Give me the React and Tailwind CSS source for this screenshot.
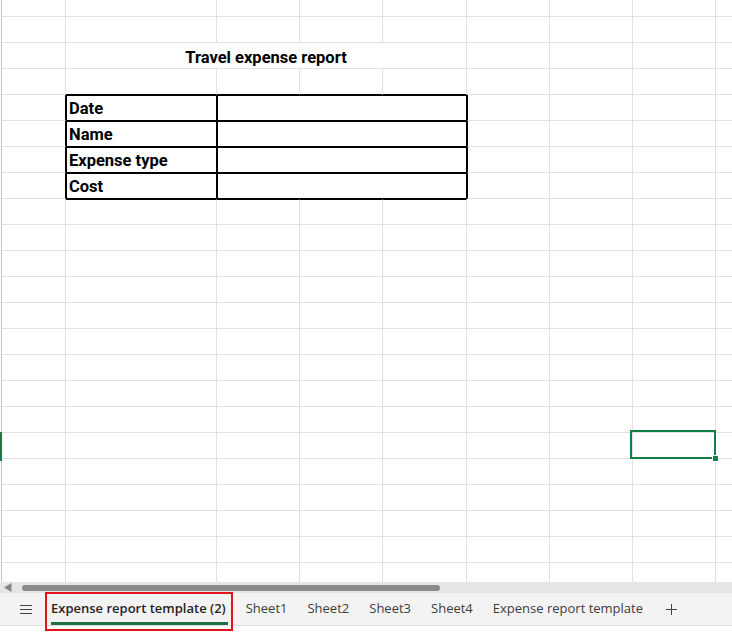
import React from "react";

const CELL = "h-full shrink-0 border-r border-b border-[#e1e1e1]";
const WIDTHS = ["w-[64px]", "w-[151px]", "w-[83px]", "w-[83px]", "w-[84px]", "w-[83px]", "w-[83px]", "w-[83px]"];

function Cell({ w, extra = "" }) {
  return <div className={`${CELL} ${w} ${extra}`} />;
}

function PlainRow({ first, selected }) {
  const h = first ? "h-[17px]" : "h-[26px]";
  return (
    <div className={`flex shrink-0 ${h}`}>
      {WIDTHS.map((w, i) =>
        selected && i === 7 ? (
          <div key={i} className={`${CELL} ${w} relative`}>
            <div className="absolute left-[-3px] top-[-3px] w-[86px] h-[29px] border-2 border-[#137e45] z-10" />
            <div className="absolute left-[79px] top-[22px] w-[7px] h-[7px] bg-[#137e45] border border-white z-20" />
          </div>
        ) : (
          <Cell key={i} w={w} />
        )
      )}
      <div className="h-full flex-1 border-b border-[#e1e1e1]" />
    </div>
  );
}

function TitleRow() {
  return (
    <div className="flex shrink-0 h-[26px]">
      <Cell w="w-[64px]" />
      <div className={`${CELL} w-[401px] flex items-end justify-center pb-[1px]`}>
        <span className="text-[16.5px] leading-[19px] font-bold text-black">Travel expense report</span>
      </div>
      <Cell w="w-[83px]" />
      <Cell w="w-[83px]" />
      <Cell w="w-[83px]" />
      <div className="h-full flex-1 border-b border-[#e1e1e1]" />
    </div>
  );
}

function AboveTableRow() {
  const edge = "h-full shrink-0 border-r border-b border-r-[#e1e1e1] border-b-black";
  return (
    <div className="flex shrink-0 h-[26px]">
      <Cell w="w-[64px]" />
      <div className={`${edge} w-[151px]`} />
      <div className={`${edge} w-[83px]`} />
      <div className={`${edge} w-[83px]`} />
      <div className={`${edge} w-[84px]`} />
      <Cell w="w-[83px]" />
      <Cell w="w-[83px]" />
      <Cell w="w-[83px]" />
      <div className="h-full flex-1 border-b border-[#e1e1e1]" />
    </div>
  );
}

function BelowTableRow() {
  const edge = "h-full shrink-0 border-t border-r border-b border-t-black border-r-[#e1e1e1] border-b-[#e1e1e1]";
  return (
    <div className="flex shrink-0 h-[26px]">
      <Cell w="w-[64px]" />
      <div className={`${edge} w-[151px]`} />
      <div className={`${edge} w-[83px]`} />
      <div className={`${edge} w-[83px]`} />
      <div className={`${edge} w-[84px]`} />
      <Cell w="w-[83px]" />
      <Cell w="w-[83px]" />
      <Cell w="w-[83px]" />
      <div className="h-full flex-1 border-b border-[#e1e1e1]" />
    </div>
  );
}

function TableRow({ label }) {
  return (
    <div className="flex shrink-0 h-[26px]">
      <div className="h-full shrink-0 w-[64px] border-r border-b border-r-black border-b-[#e1e1e1]" />
      <div className="h-full shrink-0 w-[151px] border border-black flex items-end pl-[2px] pb-[2px]">
        <span className="text-[16.5px] leading-[19px] font-bold text-black">{label}</span>
      </div>
      <div className="h-full shrink-0 w-[250px] border border-black" />
      <div className="h-full shrink-0 w-[83px] border-l border-r border-b border-l-black border-r-[#e1e1e1] border-b-[#e1e1e1]" />
      <Cell w="w-[83px]" />
      <Cell w="w-[83px]" />
      <div className="h-full flex-1 border-b border-[#e1e1e1]" />
    </div>
  );
}

function Sheet() {
  const rest = [];
  for (let r = 9; r < 23; r++) rest.push(<PlainRow key={r} selected={r === 17} />);
  return (
    <div className="relative h-[582px] overflow-hidden">
      <div className="ml-[1px] h-full border-l border-[#c4c4c4] flex flex-col" style={{ fontFamily: "Roboto, 'Liberation Sans', sans-serif" }}>
        <PlainRow first />
        <PlainRow />
        <TitleRow />
        <AboveTableRow />
        <TableRow label="Date" />
        <TableRow label="Name" />
        <TableRow label="Expense type" />
        <TableRow label="Cost" />
        <BelowTableRow />
        {rest}
      </div>
      <div className="absolute left-0 top-[432px] w-[2px] h-[29px] bg-[#137e45]" />
    </div>
  );
}

function ScrollStrip() {
  return (
    <div className="h-[11px] bg-[#e6e6e6] flex items-center">
      <svg width="8" height="9" viewBox="0 0 8 9" className="ml-[4px] shrink-0">
        <polygon points="7.5,0 7.5,9 0,4.5" fill="#858585" />
      </svg>
      <div className="ml-[10px] w-[418px] h-[6px] rounded-full bg-[#8a8a8a]" />
    </div>
  );
}

function Tab({ label }) {
  return (
    <div className="h-full flex items-center px-[10px] text-[13px] text-[#3d3d3d] whitespace-nowrap">{label}</div>
  );
}

function TabBar() {
  return (
    <div
      className="h-[33px] bg-[#f3f3f3] border-b border-[#e0e0e0] flex items-center pl-[14px]"
      style={{ fontFamily: "'Open Sans', 'Noto Sans', sans-serif" }}
    >
      <div className="w-[24px] h-full flex items-center justify-center shrink-0">
        <svg width="12" height="9" viewBox="0 0 12 9">
          <line x1="0" y1="0.5" x2="12" y2="0.5" stroke="#424242" strokeWidth="1" />
          <line x1="0" y1="4.5" x2="12" y2="4.5" stroke="#424242" strokeWidth="1" />
          <line x1="0" y1="8.5" x2="12" y2="8.5" stroke="#424242" strokeWidth="1" />
        </svg>
      </div>
      <div className="relative h-full flex items-center px-[10px] ml-[3px] text-[13px] font-semibold text-[#242424] whitespace-nowrap">
        Expense report template (2)
        <div className="absolute left-[10px] right-[8px] bottom-0 h-[3px] bg-[#1e7145]" />
        <div className="absolute left-[4px] right-[3px] top-[-1px] h-[39px] border-2 border-[#e3141e] z-10" />
      </div>
      <Tab label="Sheet1" />
      <Tab label="Sheet2" />
      <Tab label="Sheet3" />
      <Tab label="Sheet4" />
      <Tab label="Expense report template" />
      <div className="h-full w-[32px] flex items-center justify-center ml-[2px] shrink-0">
        <svg width="11" height="11" viewBox="0 0 11 11">
          <line x1="5.5" y1="0" x2="5.5" y2="11" stroke="#424242" strokeWidth="1" />
          <line x1="0" y1="5.5" x2="11" y2="5.5" stroke="#424242" strokeWidth="1" />
        </svg>
      </div>
    </div>
  );
}

export default function App() {
  return (
    <div className="w-[732px] h-[633px] bg-white overflow-hidden flex flex-col">
      <Sheet />
      <ScrollStrip />
      <TabBar />
      <div className="flex-1 bg-white" />
    </div>
  );
}
